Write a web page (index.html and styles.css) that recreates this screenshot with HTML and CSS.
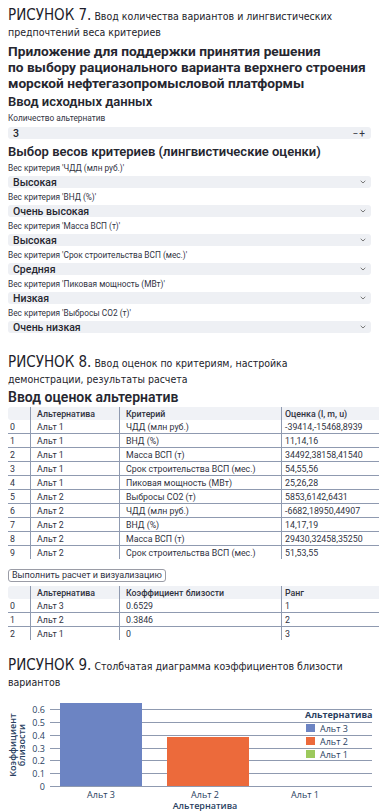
FILE: index.html
```html
<!DOCTYPE html>
<html lang="ru">
<head>
<meta charset="utf-8">
<title>Рисунки</title>
<link rel="stylesheet" href="styles.css">
</head>
<body>
<div class="caption first"><span class="fig-num">РИСУНОК 7.</span> Ввод количества вариантов и лингвистических предпочтений веса критериев</div>

<h1 class="app-title">Приложение для поддержки принятия решения<br>по выбору рационального варианта верхнего строения<br>морской нефтегазопромысловой платформы</h1>

<h2 class="sub">Ввод исходных данных</h2>
<div class="label">Количество альтернатив</div>
<div class="field num-field"><span class="val">3</span><span class="steps">−+</span></div>

<h2 class="sub sub2">Выбор весов критериев (лингвистические оценки)</h2>
<div class="label">Вес критерия 'ЧДД (млн руб.)'</div>
<div class="field select"><span class="val">Высокая</span><svg class="chev" width="6" height="4" viewBox="0 0 6 4"><path d="M0.7 0.8 L3 3 L5.3 0.8" fill="none" stroke="#777" stroke-width="1"/></svg></div>
<div class="label">Вес критерия 'ВНД (%)'</div>
<div class="field select"><span class="val">Очень высокая</span><svg class="chev" width="6" height="4" viewBox="0 0 6 4"><path d="M0.7 0.8 L3 3 L5.3 0.8" fill="none" stroke="#777" stroke-width="1"/></svg></div>
<div class="label">Вес критерия 'Масса ВСП (т)'</div>
<div class="field select"><span class="val">Высокая</span><svg class="chev" width="6" height="4" viewBox="0 0 6 4"><path d="M0.7 0.8 L3 3 L5.3 0.8" fill="none" stroke="#777" stroke-width="1"/></svg></div>
<div class="label">Вес критерия 'Срок строительства ВСП (мес.)'</div>
<div class="field select"><span class="val">Средняя</span><svg class="chev" width="6" height="4" viewBox="0 0 6 4"><path d="M0.7 0.8 L3 3 L5.3 0.8" fill="none" stroke="#777" stroke-width="1"/></svg></div>
<div class="label">Вес критерия 'Пиковая мощность (МВт)'</div>
<div class="field select"><span class="val">Низкая</span><svg class="chev" width="6" height="4" viewBox="0 0 6 4"><path d="M0.7 0.8 L3 3 L5.3 0.8" fill="none" stroke="#777" stroke-width="1"/></svg></div>
<div class="label">Вес критерия 'Выбросы CO2 (т)'</div>
<div class="field select"><span class="val">Очень низкая</span><svg class="chev" width="6" height="4" viewBox="0 0 6 4"><path d="M0.7 0.8 L3 3 L5.3 0.8" fill="none" stroke="#777" stroke-width="1"/></svg></div>

<div class="caption fig8"><span class="fig-num">РИСУНОК 8.</span> Ввод оценок по критериям, настройка демонстрации, результаты расчета</div>
<h2 class="sub sub3">Ввод оценок альтернатив</h2>
<table class="grid">
<thead><tr><th class="c0"></th><th class="c1">Альтернатива</th><th class="c2">Критерий</th><th class="c3">Оценка (l, m, u)</th></tr></thead>
<tbody>
<tr><td>0</td><td>Альт 1</td><td>ЧДД (млн руб.)</td><td>-39414,-15468,8939</td></tr>
<tr><td>1</td><td>Альт 1</td><td>ВНД (%)</td><td>11,14,16</td></tr>
<tr><td>2</td><td>Альт 1</td><td>Масса ВСП (т)</td><td>34492,38158,41540</td></tr>
<tr><td>3</td><td>Альт 1</td><td>Срок строительства ВСП (мес.)</td><td>54,55,56</td></tr>
<tr><td>4</td><td>Альт 1</td><td>Пиковая мощность (МВт)</td><td>25,26,28</td></tr>
<tr><td>5</td><td>Альт 2</td><td>Выбросы CO2 (т)</td><td>5853,6142,6431</td></tr>
<tr><td>6</td><td>Альт 2</td><td>ЧДД (млн руб.)</td><td>-6682,18950,44907</td></tr>
<tr><td>7</td><td>Альт 2</td><td>ВНД (%)</td><td>14,17,19</td></tr>
<tr><td>8</td><td>Альт 2</td><td>Масса ВСП (т)</td><td>29430,32458,35250</td></tr>
<tr><td>9</td><td>Альт 2</td><td>Срок строительства ВСП (мес.)</td><td>51,53,55</td></tr>
</tbody>
</table>

<button class="run-btn" type="button">Выполнить расчет и визуализацию</button>

<table class="grid results">
<thead><tr><th class="c0"></th><th class="c1">Альтернатива</th><th class="c2">Коэффициент близости</th><th class="c3">Ранг</th></tr></thead>
<tbody>
<tr><td>0</td><td>Альт 3</td><td>0.6529</td><td>1</td></tr>
<tr><td>1</td><td>Альт 2</td><td>0.3846</td><td>2</td></tr>
<tr><td>2</td><td>Альт 1</td><td>0</td><td>3</td></tr>
</tbody>
</table>

<div class="caption fig9"><span class="fig-num">РИСУНОК 9.</span> Столбчатая диаграмма коэффициентов близости вариантов</div>

<svg class="chart" width="379" height="124" viewBox="0 0 379 124">
  <g stroke="#8f9ab0" stroke-width="1">
    <line x1="50" x2="372" y1="19.5" y2="19.5"/>
    <line x1="50" x2="372" y1="32.5" y2="32.5"/>
    <line x1="50" x2="372" y1="45.5" y2="45.5"/>
    <line x1="50" x2="372" y1="58.5" y2="58.5"/>
    <line x1="50" x2="372" y1="70.5" y2="70.5"/>
    <line x1="50" x2="372" y1="83.5" y2="83.5"/>
    <line x1="50" x2="372" y1="96.5" y2="96.5"/>
  </g>
  <rect x="60" y="13" width="82" height="83" fill="#6c84c3"/>
  <rect x="167" y="47" width="82" height="49" fill="#ec6a3b"/>
  <g class="tick" text-anchor="end">
    <text x="45" y="23">0.6</text>
    <text x="45" y="36">0.5</text>
    <text x="45" y="49">0.4</text>
    <text x="45" y="61.5">0.3</text>
    <text x="45" y="74">0.2</text>
    <text x="45" y="87">0.1</text>
    <text x="45" y="100">0</text>
  </g>
  <g class="axis-title" transform="translate(17 55) rotate(-90)" text-anchor="middle">
    <text x="0" y="-1">Коэффициент</text>
    <text x="0" y="8">близости</text>
  </g>
  <g class="tick" text-anchor="middle">
    <text x="101" y="107.5">Альт 3</text>
    <text x="205" y="107.5">Альт 2</text>
    <text x="305" y="107.5">Альт 1</text>
  </g>
  <text class="axis-title" x="205" y="119" text-anchor="middle">Альтернатива</text>
  <text class="legend-title" x="305" y="28">Альтернатива</text>
  <rect x="306" y="34" width="9" height="8" fill="#6c84c3"/>
  <rect x="306" y="47" width="9" height="8" fill="#ec6a3b"/>
  <rect x="306" y="60" width="9" height="8" fill="#9cc95c"/>
  <g class="tick">
    <text x="320" y="41.5">Альт 3</text>
    <text x="320" y="54.5">Альт 2</text>
    <text x="320" y="67.5">Альт 1</text>
  </g>
</svg>
</body>
</html>
```
FILE: styles.css
```css
html, body {
  margin: 0;
  padding: 0;
  background: #ffffff;
  overflow: hidden;
}
body {
  padding: 0 8px;
  width: 363px;
  font-family: Roboto, "Noto Sans", sans-serif;
  color: #31333f;
}

.caption {
  max-width: 350px;
  font-family: "Liberation Sans Narrow", "DejaVu Sans Condensed", Roboto, sans-serif;
  font-size: 10.5px;
  line-height: 15.5px;
  color: #1d1d2b;
}
.caption.first { padding-top: 8px; }
.fig-num {
  font-size: 15px;
  line-height: 15px;
}
.caption.fig8 { margin-top: 22px; }
.caption.fig9 { margin-top: 18px; }

.app-title {
  margin: 3px 0 0;
  font-size: 13.7px;
  line-height: 16px;
  font-weight: 700;
  color: #262730;
}

.sub {
  margin: 3px 0 0;
  font-size: 13px;
  line-height: 16px;
  font-weight: 600;
  color: #262730;
}
.sub2 { margin-top: 5px; }
.sub3 { margin-top: 2px; font-size: 14px; }

.label {
  margin-top: 4px;
  font-size: 8.3px;
  line-height: 10px;
  color: #31333f;
}
.sub + .label { margin-top: 3px; }

.field {
  margin-top: 3px;
  height: 12px;
  background: #eef0f4;
  border-radius: 3px;
  display: flex;
  align-items: center;
  justify-content: space-between;
  padding: 0 5px;
}
.num-field { margin-top: 4px; }
.val {
  font-size: 10.5px;
  font-weight: 500;
  color: #262730;
}
.steps {
  font-size: 10px;
  color: #31333f;
  letter-spacing: 1px;
}
.chev { display: block; }

.grid {
  margin-top: 2px;
  width: 363px;
  border-collapse: collapse;
  table-layout: fixed;
  font-size: 8.8px;
  color: #31333f;
}
.grid th, .grid td {
  height: 13px;
  padding: 0 0 0 3px;
  text-align: left;
  white-space: nowrap;
  overflow: hidden;
  line-height: 12px;
}
.grid th {
  height: 13px;
  background: #f0f2f6;
  font-weight: 500;
}
.grid th.c0 { border-radius: 3px 0 0 3px; }
.grid th.c3 { border-radius: 0 3px 3px 0; }
.grid .c0 { width: 20px; }
.grid .c1 { width: 82px; }
.grid .c2 { width: 155px; }
.grid .c3 { width: 106px; }
.grid td:first-child, .grid th:first-child { padding-left: 2px; }
.grid td + td, .grid th + th {
  border-left: 1px solid #8f9ab0;
  padding-left: 6px;
}
.grid tbody tr + tr td {
  border-top: 1px solid #8f9ab0;
}
.grid td:last-child, .grid th:last-child { padding-left: 3px; }

.run-btn {
  display: block;
  margin: 10px 0 0 0;
  height: 13px;
  padding: 0 3px;
  border: 1px solid #9a9ca6;
  border-radius: 3px;
  background: #ffffff;
  font-family: Roboto, sans-serif;
  font-size: 9px;
  line-height: 11px;
  color: #31333f;
}
.results { margin-top: 4px; }

.chart {
  display: block;
  margin-left: -8px;
}
.chart .tick {
  font-family: "Open Sans", "Liberation Sans", sans-serif;
  font-size: 9px;
  fill: #2a3f5f;
}
.chart .axis-title {
  font-family: "Open Sans", "Liberation Sans", sans-serif;
  font-size: 9px;
  font-weight: 600;
  fill: #2a3f5f;
}
.chart .legend-title {
  font-family: "Open Sans", "Liberation Sans", sans-serif;
  font-size: 9px;
  font-weight: 700;
  fill: #2a3f5f;
}
```
